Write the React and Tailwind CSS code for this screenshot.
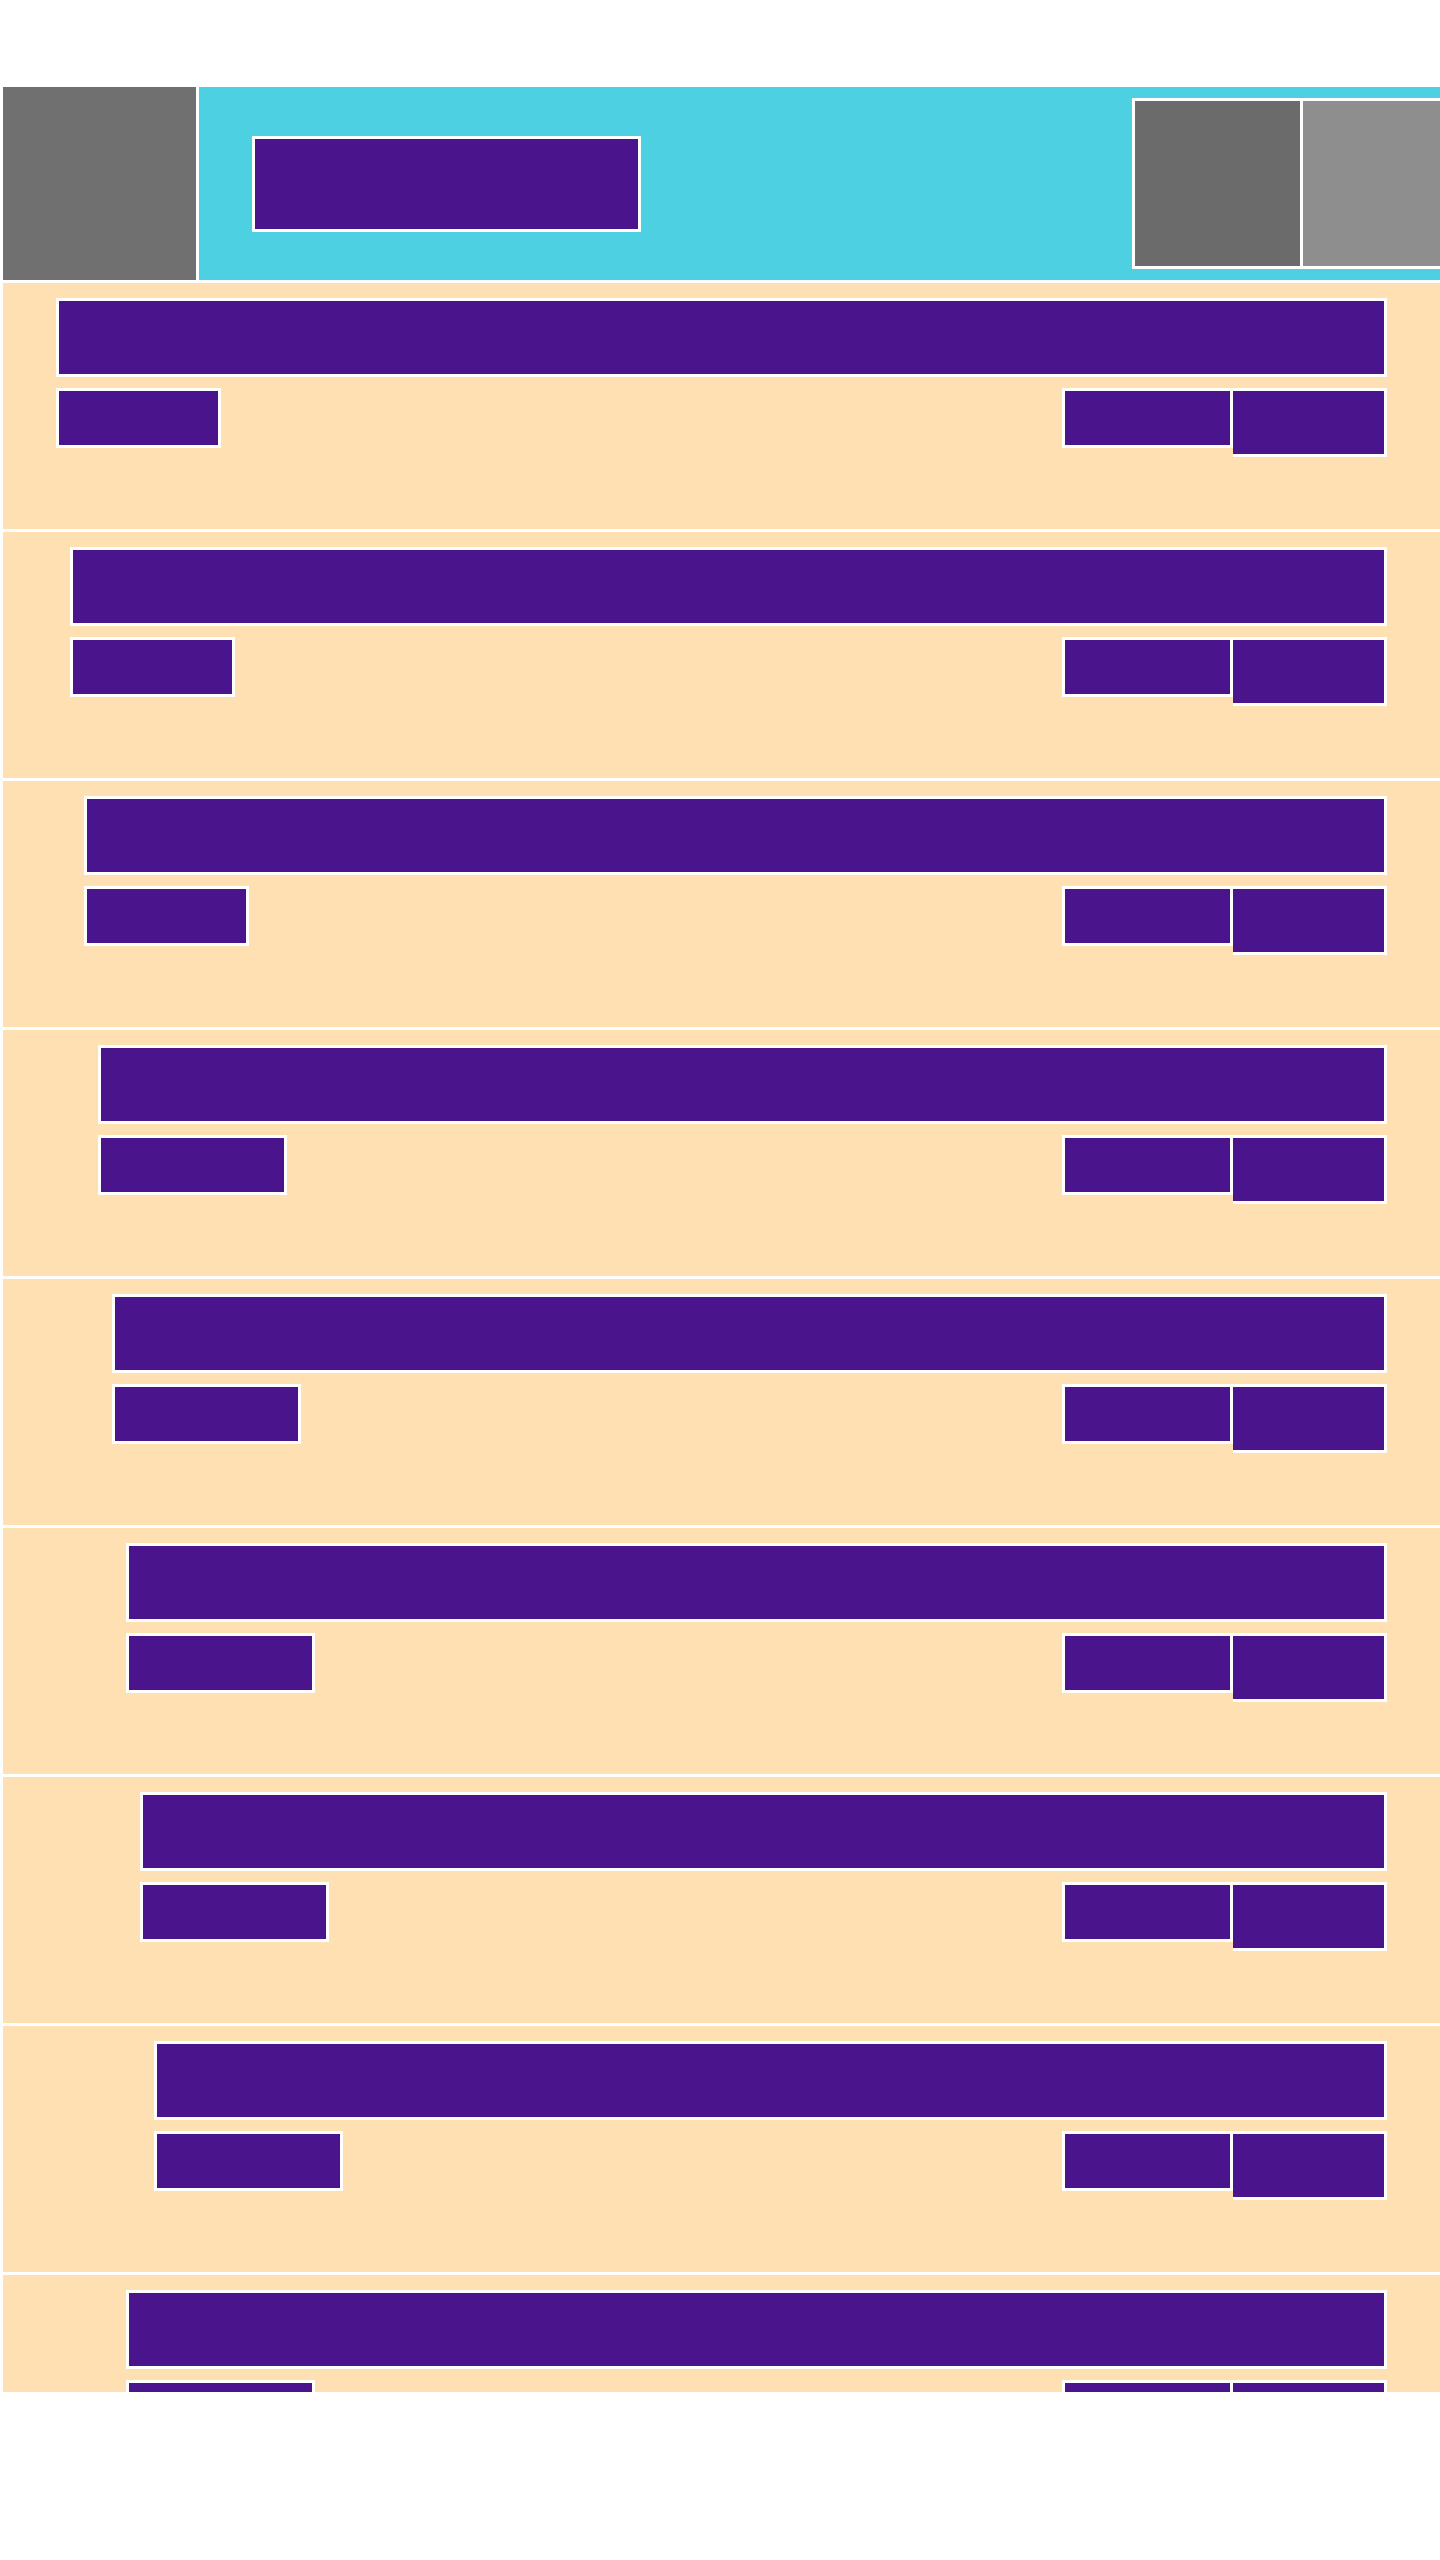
import React from 'react';

// indent class + width of the small left block, per card
const cards = [
  { pad: 'pl-[53px]', tag: 'w-[165px]' },
  { pad: 'pl-[67px]', tag: 'w-[165px]' },
  { pad: 'pl-[81px]', tag: 'w-[165px]' },
  { pad: 'pl-[95px]', tag: 'w-[189px]' },
  { pad: 'pl-[109px]', tag: 'w-[189px]' },
  { pad: 'pl-[123px]', tag: 'w-[189px]' },
  { pad: 'pl-[137px]', tag: 'w-[189px]' },
  { pad: 'pl-[151px]', tag: 'w-[189px]' },
  { pad: 'pl-[123px]', tag: 'w-[189px]' },
];

const Card = ({ pad, tag }) => (
  <div className={`h-[246px] shrink-0 bg-[#ffe0b2] pt-[15px] pr-[53px] ${pad}`}>
    <div className="h-[79px] border-[3px] border-white bg-[#4a148c]" />
    <div className="mt-[11px] flex items-start justify-between">
      <div className={`h-[60px] border-[3px] border-white bg-[#4a148c] ${tag}`} />
      <div className="flex items-start">
        <div className="w-[171px] h-[60px] border-[3px] border-white bg-[#4a148c]" />
        <div className="w-[154px] h-[69px] border-[3px] border-l-0 border-white bg-[#4a148c]" />
      </div>
    </div>
  </div>
);

const App = () => {
  return (
    <div className="w-[1440px] min-h-[2560px] bg-white pt-[87px] font-['Liberation_Sans',sans-serif]">
      <div className="h-[2305px] overflow-hidden flex flex-col gap-[3px] pl-[3px]">
        <header className="flex h-[193px] shrink-0 gap-[3px]">
          <div className="w-[193px] shrink-0 bg-[#707070]" />
          <div className="flex-1 min-w-0 overflow-hidden bg-[#4dd0e1] flex items-center pl-[53px]">
            <div className="w-[389px] h-[96px] shrink-0 border-[3px] border-white bg-[#4a148c]" />
            <div className="ml-[491px] h-[171px] shrink-0 flex gap-[3px] bg-white p-[3px]">
              <div className="w-[165px] bg-[#6b6b6b]" />
              <div className="w-[165px] bg-[#8e8e8e]" />
            </div>
          </div>
        </header>
        {cards.map((c, i) => (
          <Card key={i} pad={c.pad} tag={c.tag} />
        ))}
      </div>
    </div>
  );
};

export default App;
